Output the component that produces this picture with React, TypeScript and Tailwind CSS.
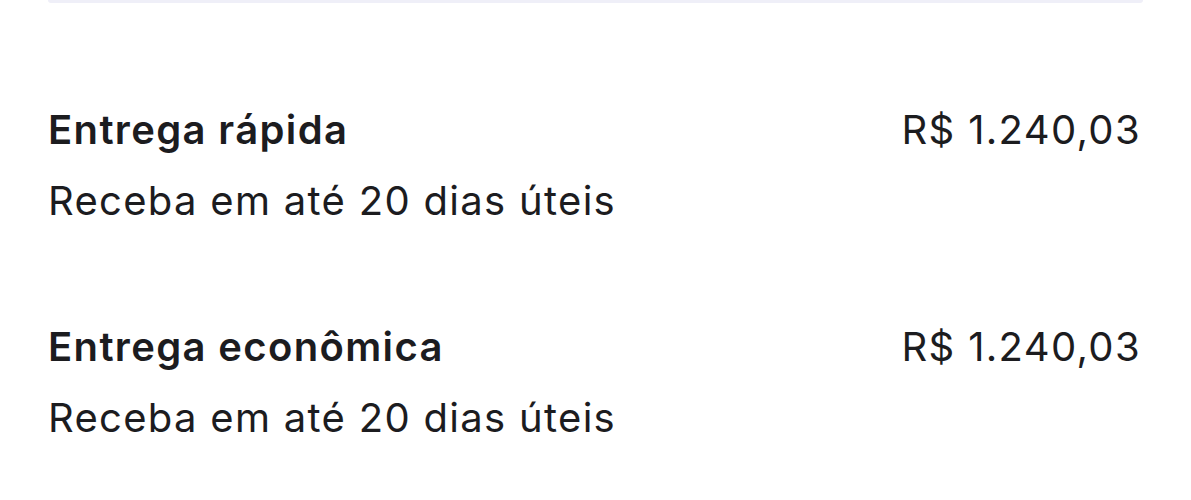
import { FC } from "react";

type Option = { title: string; subtitle: string; price: string };

const options: Option[] = [
    { title: "Entrega rápida", subtitle: "Receba em até 20 dias úteis", price: "R$ 1.240,03" },
    { title: "Entrega econômica", subtitle: "Receba em até 20 dias úteis", price: "R$ 1.240,03" },
];

const ShippingRow: FC<{ option: Option }> = ({ option }) => (
    <div className="flex items-start justify-between">
        <div className="flex flex-col gap-[25px]">
            <h3 className="text-[40px] font-semibold leading-[46px] tracking-[1.35px] text-[#1c1c1f]">{option.title}</h3>
            <p className="text-[40px] leading-[46px] tracking-[1.3px] text-[#1c1c1f]">{option.subtitle}</p>
        </div>
        <span className="-mr-[1px] text-[40px] leading-[46px] tracking-[1.35px] text-[#1c1c1f]">{option.price}</span>
    </div>
);

export default function App() {
    return (
        <div className="h-[500px] w-[1191px] bg-white px-[48px]" style={{ fontFamily: "Inter, 'Noto Sans', sans-serif" }}>
            <div className="h-[3px] rounded-b-sm bg-[#efeff8]" />
            <div className="flex flex-col gap-[100px] pt-[104px] pr-[3px]">
                {options.map((option, key) => (
                    <ShippingRow key={key} option={option} />
                ))}
            </div>
        </div>
    );
}
